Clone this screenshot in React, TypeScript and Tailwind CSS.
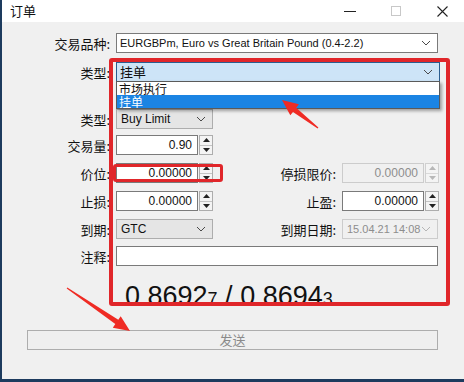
import React from 'react';

const cjk = "font-['Noto_Sans_CJK_SC',sans-serif]";
const latin = "font-['Liberation_Sans','Noto_Sans_CJK_SC',sans-serif]";

// tapered arrow polygon from tail to tip
const arrow = (x1: number, y1: number, x2: number, y2: number) => {
    const len = Math.hypot(x2 - x1, y2 - y1);
    const dx = (x2 - x1) / len, dy = (y2 - y1) / len;
    const nx = -dy, ny = dx;
    const head = 16, headW = 7, shaftW = 2.6, tailW = 0.6;
    const bx = x2 - dx * head, by = y2 - dy * head;
    const p = (x: number, y: number) => `${x.toFixed(1)},${y.toFixed(1)}`;
    return [
        p(x1 + nx * tailW, y1 + ny * tailW),
        p(bx + nx * shaftW, by + ny * shaftW),
        p(bx + nx * headW, by + ny * headW),
        p(x2, y2),
        p(bx - nx * headW, by - ny * headW),
        p(bx - nx * shaftW, by - ny * shaftW),
        p(x1 - nx * tailW, y1 - ny * tailW),
    ].join(' ');
};

const Chevron = ({ light }: { light?: boolean }) => (
    <svg width="10" height="6" viewBox="0 0 10 6" className="shrink-0">
        <path d="M1 1 L5 5 L9 1" fill="none" stroke={light ? '#b5b5b5' : '#4a4a4a'} strokeWidth="1" />
    </svg>
);

const Spin = ({ disabled }: { disabled?: boolean }) => {
    const c = disabled ? '#b8b8b8' : '#222';
    return (
        <div className={`ml-[1px] w-[14px] h-[20px] flex flex-col border ${disabled ? 'border-[#d0d0d0]' : 'border-[#adadad]'} bg-[#f4f4f4]`}>
            <div className={`flex-1 flex items-center justify-center border-b ${disabled ? 'border-[#d9d9d9]' : 'border-[#c4c4c4]'}`}>
                <svg width="7" height="4" viewBox="0 0 7 4"><path d="M0 4 L3.5 0 L7 4 Z" fill={c} /></svg>
            </div>
            <div className="flex-1 flex items-center justify-center">
                <svg width="7" height="4" viewBox="0 0 7 4"><path d="M0 0 L3.5 4 L7 0 Z" fill={c} /></svg>
            </div>
        </div>
    );
};

const Label = ({ text, w = 'w-[108px]' }: { text: string; w?: string }) => (
    <div className={`${w} shrink-0 text-right text-[13px] leading-none text-[#111] ${cjk}`}>{text}</div>
);

const NumInput = ({ value, disabled }: { value: string; disabled?: boolean }) => (
    <div className="flex items-center">
        <div className={`w-[82px] h-[20px] border ${disabled ? 'border-[#cccccc] bg-[#f0f0f0] text-[#8d8d8d]' : 'border-[#7a7a7a] bg-white text-[#111]'} flex items-center justify-end pr-[5px] text-[12px] ${latin}`}>
            {value}
        </div>
        <Spin disabled={disabled} />
    </div>
);

const Select = ({ value, w, disabled, size = 'text-[12px]' }: { value: string; w: string; disabled?: boolean; size?: string }) => (
    <div className={`${w} h-[20px] border ${disabled ? 'border-[#cccccc] bg-[#f0f0f0] text-[#8d8d8d]' : 'border-[#adadad] bg-[#e5e5e5] text-[#111]'} flex items-center justify-between pl-[4px] pr-[6px] whitespace-nowrap ${size} ${latin}`}>
        <span>{value}</span>
        <Chevron light={disabled} />
    </div>
);

export default function App() {
    return (
        <div className="w-[464px] h-[382px] relative overflow-hidden bg-[#f0f0f0] border-l-2 border-b-[3px] border-[#1d3b5e] flex flex-col">
            {/* title bar */}
            <div className="h-[22px] bg-white flex items-center shrink-0">
                <span className={`ml-[8px] text-[13px] text-[#111] ${cjk}`}>订单</span>
                <div className="ml-auto flex items-center h-full">
                    <div className="w-[12px] h-[1px] bg-[#222] mr-[35px]" />
                    <div className="w-[10px] h-[10px] border border-[#c8c8c8] mr-[36px]" />
                    <svg width="11" height="11" viewBox="0 0 11 11" className="mr-[16px]">
                        <path d="M0.5 0.5 L10.5 10.5 M10.5 0.5 L0.5 10.5" stroke="#222" strokeWidth="1.1" />
                    </svg>
                </div>
            </div>

            {/* form */}
            <div className="flex flex-col">
                <div className="mt-[11px] h-[20px] flex items-center gap-[6px]">
                    <Label text="交易品种:" />
                    <div className={`w-[322px] h-[20px] border border-[#7a7a7a] bg-white flex items-center justify-between pl-[3px] pr-[6px] text-[11px] text-[#111] ${latin}`}>
                        <span>EURGBPm, Euro vs Great Britain Pound (0.4-2.2)</span>
                        <Chevron />
                    </div>
                </div>

                <div className="mt-[9px] h-[20px] flex items-center gap-[6px]">
                    <Label text="类型:" />
                    <div className="relative">
                        <div className={`w-[324px] h-[20px] border border-[#2a5d8f] bg-[#cde4f7] flex items-center justify-between pl-[3px] pr-[6px] text-[13px] text-[#111] ${cjk}`}>
                            <span>挂单</span>
                            <Chevron />
                        </div>
                        {/* open dropdown list */}
                        <div className={`absolute left-0 top-[19px] w-[324px] border border-[#5a5a5a] bg-white shadow-[2px_2px_3px_rgba(0,0,0,0.35)] text-[12px] ${cjk} z-10`}>
                            <div className="h-[13px] leading-[13px] pl-[2px] text-[#111]">市场执行</div>
                            <div className="h-[13px] leading-[13px] pl-[2px] bg-[#1b84e3] text-white">挂单</div>
                        </div>
                    </div>
                </div>

                <div className="mt-[27px] h-[20px] flex items-center gap-[6px]">
                    <Label text="类型:" />
                    <Select value="Buy Limit" w="w-[97px]" />
                </div>

                <div className="mt-[6px] h-[20px] flex items-center gap-[6px]">
                    <Label text="交易量:" />
                    <NumInput value="0.90" />
                </div>

                <div className="mt-[8px] h-[20px] flex items-center gap-[6px]">
                    <Label text="价位:" />
                    <NumInput value="0.00000" />
                    <Label text="停损限价:" w="w-[117px]" />
                    <NumInput value="0.00000" disabled />
                </div>

                <div className="mt-[8px] h-[20px] flex items-center gap-[6px]">
                    <Label text="止损:" />
                    <NumInput value="0.00000" />
                    <Label text="止盈:" w="w-[117px]" />
                    <NumInput value="0.00000" />
                </div>

                <div className="mt-[8px] h-[20px] flex items-center gap-[6px]">
                    <Label text="到期:" />
                    <Select value="GTC" w="w-[97px]" />
                    <Label text="到期日期:" w="w-[117px]" />
                    <Select value="15.04.21 14:08" w="w-[96px]" disabled size="text-[11px]" />
                </div>

                <div className="mt-[7px] h-[20px] flex items-center gap-[6px]">
                    <Label text="注释:" />
                    <div className="w-[322px] h-[20px] border border-[#7a7a7a] bg-white" />
                </div>

                {/* bid / ask */}
                <div className={`mt-[17px] ml-[123px] flex items-baseline whitespace-pre text-[#111] text-[27px] leading-none ${latin}`}>
                    <span>0.8692</span>
                    <span className="text-[18px]">7</span>
                    <span>{' / '}</span>
                    <span>0.8694</span>
                    <span className="text-[18px]">3</span>
                </div>

                <div className={`mt-[20px] ml-[25px] w-[411px] h-[20px] border border-[#adadad] bg-[#efefef] flex items-center justify-center text-[13px] text-[#8a8a8a] ${cjk}`}>
                    发送
                </div>
            </div>

            {/* annotations */}
            <div className="absolute left-[107px] top-[58px] w-[341px] h-[248px] border-4 border-[#e0262a] rounded-[3px] pointer-events-none z-20" />
            <div className="absolute left-[111px] top-[164px] w-[110px] h-[18px] border-[3px] border-[#e0262a] rounded-[3px] pointer-events-none z-20" />
            <svg className="absolute -left-[2px] top-0 pointer-events-none z-30" width="464" height="382" viewBox="0 0 464 382">
                <polygon points={arrow(318, 128, 282, 100)} fill="#ef2b24" />
                <polygon points={arrow(67, 288, 130, 331)} fill="#ef2b24" />
            </svg>
        </div>
    );
}
